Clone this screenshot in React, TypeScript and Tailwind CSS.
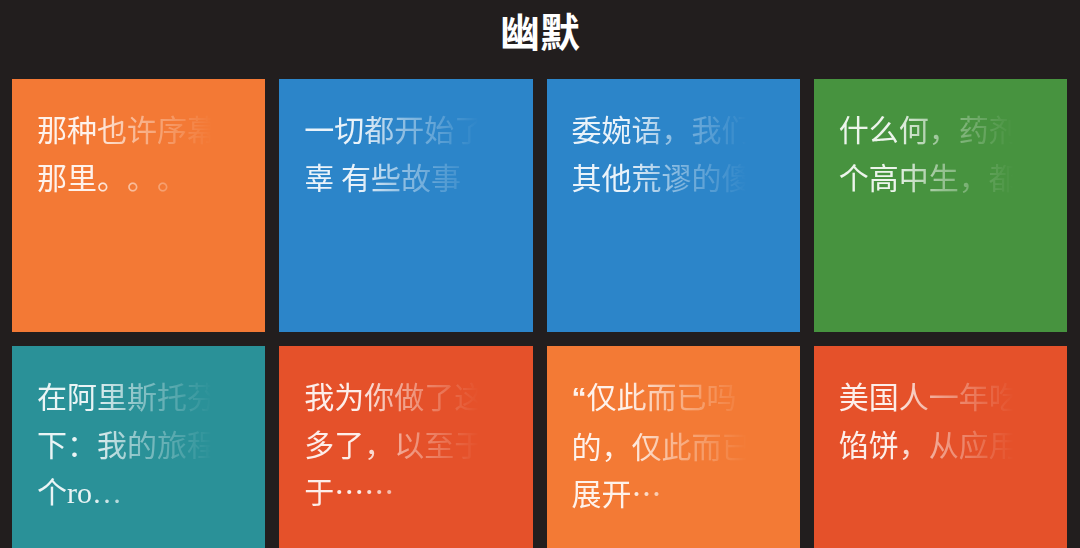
const tiles: { bg: string; lines: React.ReactNode[] }[] = [
  { bg: "bg-[#f37935]", lines: ["那种也许序幕就", "那里。。。"] },
  { bg: "bg-[#2c85c9]", lines: ["一切都开始了无", "辜 有些故事"] },
  { bg: "bg-[#2c85c9]", lines: ["委婉语，我们", "其他荒谬的傻"] },
  { bg: "bg-[#47933f]", lines: ["什么何，药剂", "个高中生，都"] },
  {
    bg: "bg-[#2a9198]",
    lines: [
      "在阿里斯托芬",
      "下：我的旅程",
      <>
        个<span className="font-['Liberation_Serif',serif]">ro…</span>
      </>,
    ],
  },
  { bg: "bg-[#e5512a]", lines: ["我为你做了这", "多了，以至于", "于……"] },
  {
    bg: "bg-[#f37a35]",
    lines: [
      <>
        <span className="font-['Liberation_Sans',sans-serif] font-bold">“</span>仅此而已吗
      </>,
      "的，仅此而已",
      "展开…",
    ],
  },
  { bg: "bg-[#e5512a]", lines: ["美国人一年吃", "馅饼，从应用"] },
];

function Tile({ bg, lines }: { bg: string; lines: React.ReactNode[] }) {
  return (
    <div className={`${bg} h-[253px] pl-[25px] pt-[26px]`}>
      <div className="w-[184px] overflow-hidden text-[30px] leading-[47.5px] text-white/90 [text-spacing-trim:space-all] [mask-image:linear-gradient(to_right,#000_30%,rgba(0,0,0,0.5)_55%,rgba(0,0,0,0.2)_78%,transparent_95%)]">
        {lines.map((l, i) => (
          <div key={i} className="whitespace-nowrap">
            {l}
          </div>
        ))}
      </div>
    </div>
  );
}

export default function App() {
  return (
    <div className="h-[548px] w-[1080px] overflow-hidden bg-[#221e1e] font-['Noto_Sans_CJK_SC','Noto_Sans',sans-serif]">
      {/* header */}
      <div className="flex h-[79px] justify-center pt-[6px]">
        <h1 className="text-[40px] font-bold leading-[48px] text-white">幽默</h1>
      </div>

      {/* tiles */}
      <div className="grid grid-cols-4 gap-x-[14px] gap-y-[14px] pl-[12px] pr-[13px]">
        {tiles.map((t, i) => (
          <Tile key={i} bg={t.bg} lines={t.lines} />
        ))}
      </div>
    </div>
  );
}
